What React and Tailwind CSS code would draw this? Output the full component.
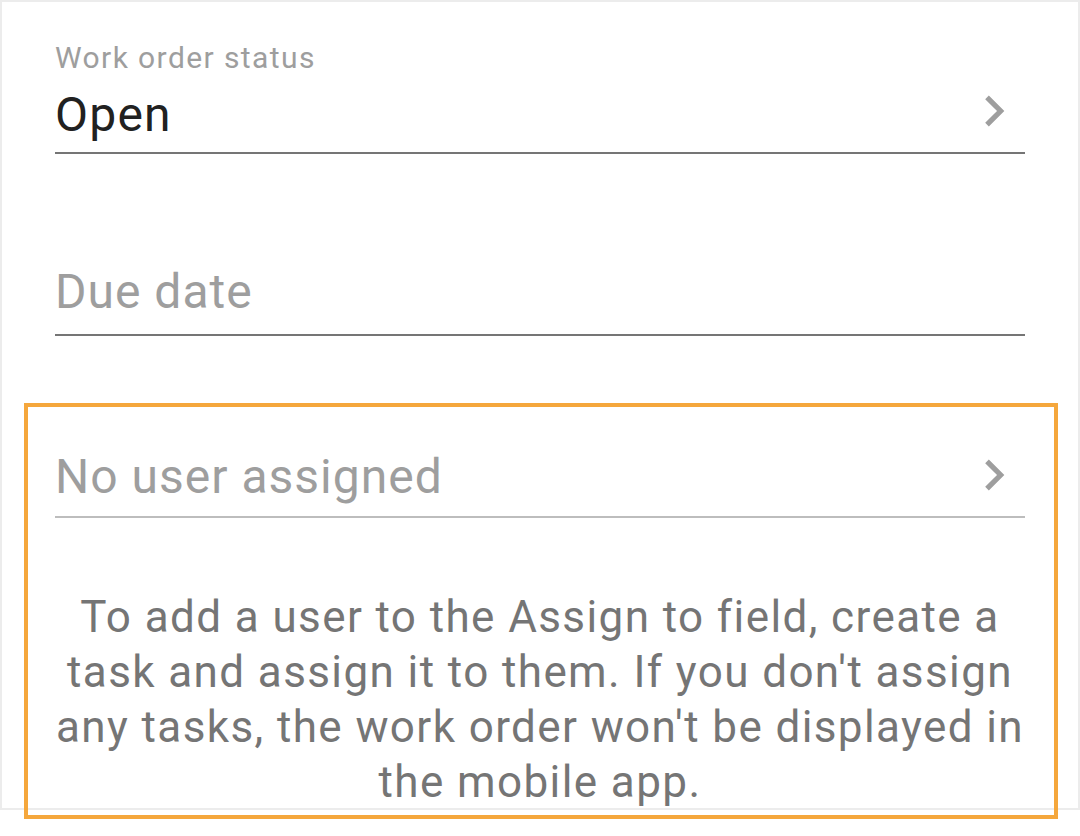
import React from "react";

function Chevron() {
  return (
    <svg viewBox="0 0 24 24" className="h-[62px] w-[62px] shrink-0" fill="#9e9e9e" aria-hidden>
      <path d="M10 6L8.59 7.41 13.17 12l-4.58 4.59L10 18l6-6z" />
    </svg>
  );
}

export default function App() {
  return (
    <div className="relative h-[836px] w-[1080px] bg-white" style={{ fontFamily: "Roboto, 'Noto Sans', sans-serif" }}>
      <div className="h-[810px] overflow-hidden border-2 border-[#ececec] px-[53px]">
        <div className="pt-[38px]">
          <p className="text-[30px] leading-[36px] tracking-[1.4px] text-[#9e9e9e]">Work order status</p>
          <div className="mt-[-4px] flex h-[82px] items-end justify-between border-b-2 border-[#757575] pb-[9px]">
            <span className="text-[48px] leading-[56px] tracking-[1.2px] text-[#212121]">Open</span>
            <div className="mt-[8px] self-start">
              <Chevron />
            </div>
          </div>
        </div>

        <div className="mt-[114px] flex h-[68px] items-end border-b-2 border-[#757575] pb-[14px]">
          <span className="text-[48px] leading-[56px] tracking-[1px] text-[#9e9e9e]">Due date</span>
        </div>

        <div className="mt-[108px] flex h-[74px] items-end justify-between border-b-2 border-[#bdbdbd] pb-[11px]">
          <span className="text-[48px] leading-[56px] tracking-[1px] text-[#9e9e9e]">No user assigned</span>
          <div className="mb-[-1px]">
            <Chevron />
          </div>
        </div>

        <p className="mt-[72px] text-center text-[44px] leading-[55px] tracking-[1.4px] text-[#757575]">
          To add a user to the Assign to field, create a task and assign it to them. If you don't assign any tasks, the work order won't be displayed in the mobile app.
        </p>
      </div>

      <div className="pointer-events-none absolute left-[24px] top-[403px] h-[416px] w-[1034px] border-4 border-[#f5a73c]" />
    </div>
  );
}
